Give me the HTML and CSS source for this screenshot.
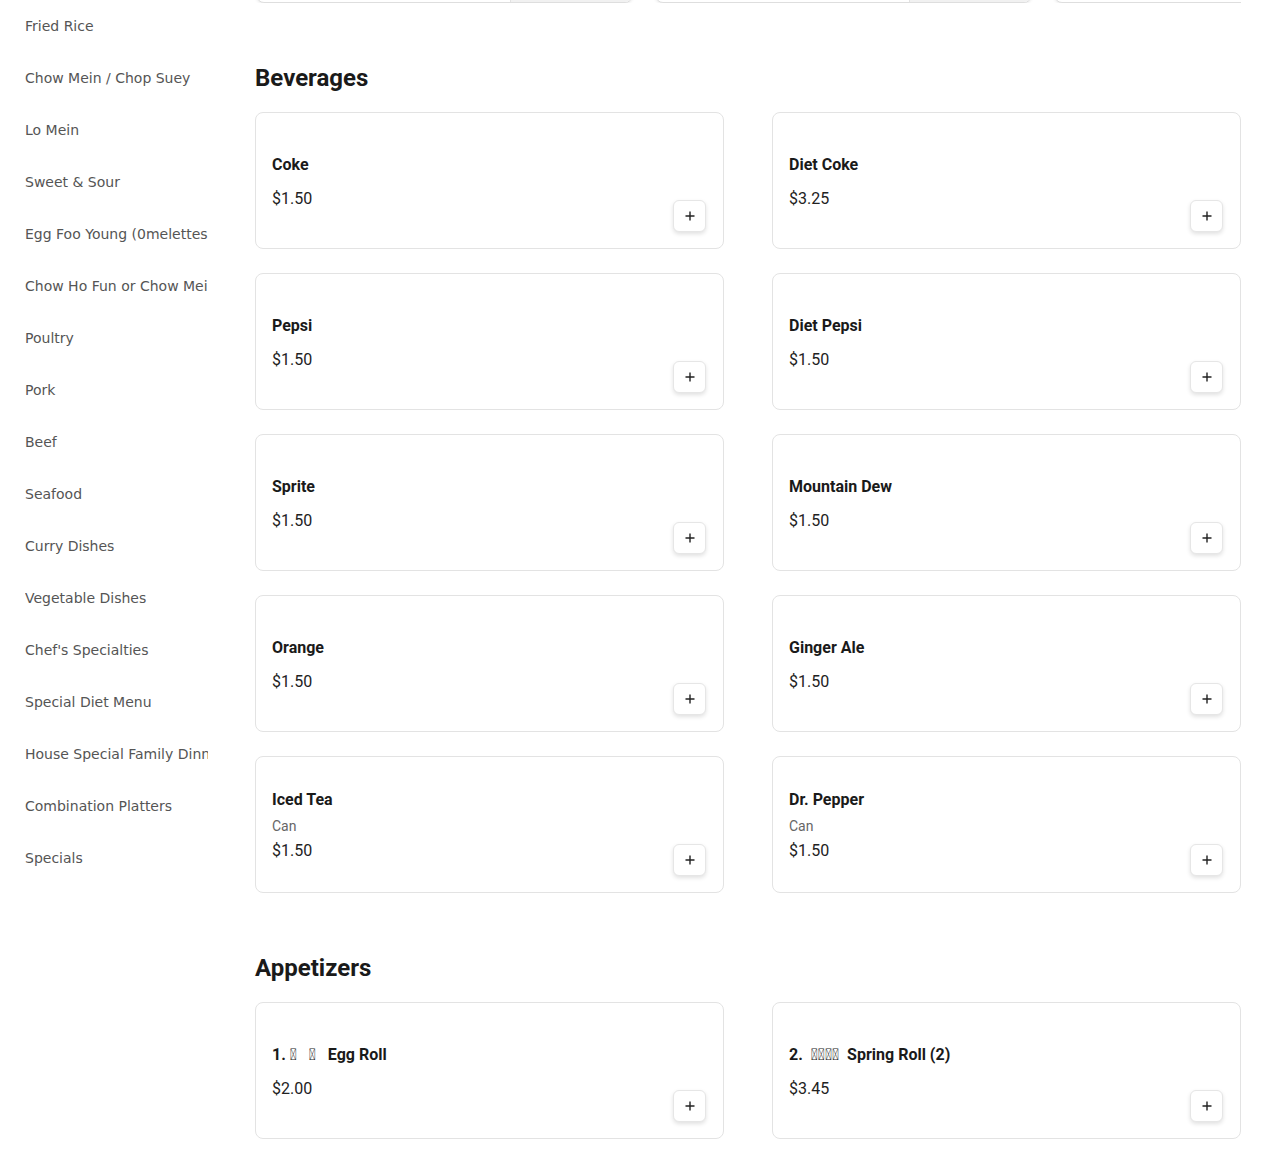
FILE: index.html
```html
<!DOCTYPE html>
<html>
<head>
<meta charset="utf-8">
<link rel="stylesheet" href="styles.css">
</head>
<body>
<div class="page">
  <nav class="sidebar">
    <div class="nav-item">Fried Rice</div>
    <div class="nav-item">Chow Mein / Chop Suey</div>
    <div class="nav-item">Lo Mein</div>
    <div class="nav-item">Sweet &amp; Sour</div>
    <div class="nav-item">Egg Foo Young (0melettes</div>
    <div class="nav-item">Chow Ho Fun or Chow Mei Fun</div>
    <div class="nav-item">Poultry</div>
    <div class="nav-item">Pork</div>
    <div class="nav-item">Beef</div>
    <div class="nav-item">Seafood</div>
    <div class="nav-item">Curry Dishes</div>
    <div class="nav-item">Vegetable Dishes</div>
    <div class="nav-item">Chef's Specialties</div>
    <div class="nav-item">Special Diet Menu</div>
    <div class="nav-item">House Special Family Dinner</div>
    <div class="nav-item">Combination Platters</div>
    <div class="nav-item">Specials</div>
  </nav>
  <main class="content">
    <div class="strip">
      <div class="strip-card"><div class="strip-body"></div><div class="strip-img"></div></div>
      <div class="strip-card"><div class="strip-body"></div><div class="strip-img"></div></div>
      <div class="strip-card"><div class="strip-body"></div><div class="strip-img"></div></div>
    </div>

    <section class="section">
      <h2 class="section-title">Beverages</h2>
      <div class="grid">
        <div class="card"><div class="info"><div class="name">Coke</div><div class="price">$1.50</div></div><button class="add"><svg width="12" height="12" viewBox="0 0 12 12"><path d="M6 1.5v9M1.5 6h9" stroke="#222" stroke-width="1.4"/></svg></button></div>
        <div class="card"><div class="info"><div class="name">Diet Coke</div><div class="price">$3.25</div></div><button class="add"><svg width="12" height="12" viewBox="0 0 12 12"><path d="M6 1.5v9M1.5 6h9" stroke="#222" stroke-width="1.4"/></svg></button></div>
        <div class="card"><div class="info"><div class="name">Pepsi</div><div class="price">$1.50</div></div><button class="add"><svg width="12" height="12" viewBox="0 0 12 12"><path d="M6 1.5v9M1.5 6h9" stroke="#222" stroke-width="1.4"/></svg></button></div>
        <div class="card"><div class="info"><div class="name">Diet Pepsi</div><div class="price">$1.50</div></div><button class="add"><svg width="12" height="12" viewBox="0 0 12 12"><path d="M6 1.5v9M1.5 6h9" stroke="#222" stroke-width="1.4"/></svg></button></div>
        <div class="card"><div class="info"><div class="name">Sprite</div><div class="price">$1.50</div></div><button class="add"><svg width="12" height="12" viewBox="0 0 12 12"><path d="M6 1.5v9M1.5 6h9" stroke="#222" stroke-width="1.4"/></svg></button></div>
        <div class="card"><div class="info"><div class="name">Mountain Dew</div><div class="price">$1.50</div></div><button class="add"><svg width="12" height="12" viewBox="0 0 12 12"><path d="M6 1.5v9M1.5 6h9" stroke="#222" stroke-width="1.4"/></svg></button></div>
        <div class="card"><div class="info"><div class="name">Orange</div><div class="price">$1.50</div></div><button class="add"><svg width="12" height="12" viewBox="0 0 12 12"><path d="M6 1.5v9M1.5 6h9" stroke="#222" stroke-width="1.4"/></svg></button></div>
        <div class="card"><div class="info"><div class="name">Ginger Ale</div><div class="price">$1.50</div></div><button class="add"><svg width="12" height="12" viewBox="0 0 12 12"><path d="M6 1.5v9M1.5 6h9" stroke="#222" stroke-width="1.4"/></svg></button></div>
        <div class="card"><div class="info"><div class="name">Iced Tea</div><div class="desc">Can</div><div class="price">$1.50</div></div><button class="add"><svg width="12" height="12" viewBox="0 0 12 12"><path d="M6 1.5v9M1.5 6h9" stroke="#222" stroke-width="1.4"/></svg></button></div>
        <div class="card"><div class="info"><div class="name">Dr. Pepper</div><div class="desc">Can</div><div class="price">$1.50</div></div><button class="add"><svg width="12" height="12" viewBox="0 0 12 12"><path d="M6 1.5v9M1.5 6h9" stroke="#222" stroke-width="1.4"/></svg></button></div>
      </div>
    </section>

    <section class="section">
      <h2 class="section-title">Appetizers</h2>
      <div class="grid">
        <div class="card"><div class="info"><div class="name">1. &#xE000; &nbsp; &#xE001; &nbsp; Egg Roll</div><div class="price">$2.00</div></div><button class="add"><svg width="12" height="12" viewBox="0 0 12 12"><path d="M6 1.5v9M1.5 6h9" stroke="#222" stroke-width="1.4"/></svg></button></div>
        <div class="card"><div class="info"><div class="name">2. &nbsp;&#xE002;&#xE003;&#xE004;&#xE005; &nbsp;Spring Roll (2)</div><div class="price">$3.45</div></div><button class="add"><svg width="12" height="12" viewBox="0 0 12 12"><path d="M6 1.5v9M1.5 6h9" stroke="#222" stroke-width="1.4"/></svg></button></div>
      </div>
    </section>
  </main>
</div>
</body>
</html>
```

FILE: styles.css
```css
* { box-sizing: border-box; }
html, body { margin: 0; padding: 0; background: #fff; }
body { font-family: Roboto, "Liberation Sans", sans-serif; color: #1a1a1a; }

.page { display: flex; align-items: flex-start; }

.sidebar {
  width: 230px;
  flex: none;
  padding-left: 25px;
}
.nav-item {
  width: 183px;
  height: 52px;
  line-height: 52px;
  font-family: "DejaVu Sans", sans-serif;
  font-size: 14px;
  color: #555;
  white-space: nowrap;
  overflow: hidden;
}

.content {
  width: 986px;
  margin-left: 25px;
  flex: none;
}

.strip {
  height: 3px;
  overflow: hidden;
  display: flex;
  align-items: flex-end;
  gap: 22px;
  padding-left: 1px;
}
.strip-card {
  flex: none;
  width: 377px;
  height: 120px;
  display: flex;
  border: 1px solid #dedede;
  border-radius: 8px;
  overflow: hidden;
  box-shadow: 0 1px 3px rgba(0,0,0,0.08);
  background: #fff;
}
.strip-body { flex: 1; }
.strip-img { width: 122px; background: #f1f1f1; border-left: 1px solid #e2e2e2; }

.section { margin-top: 61px; }
.section-title {
  margin: 0 0 20px;
  font-size: 24px;
  line-height: 28px;
  font-weight: 700;
  color: #1a1a1a;
}

.grid {
  display: grid;
  grid-template-columns: 469px 469px;
  column-gap: 48px;
  row-gap: 24px;
}

.card {
  height: 137px;
  border: 1px solid #e3e3e3;
  border-radius: 8px;
  padding: 16px;
  display: flex;
  align-items: center;
  justify-content: space-between;
  background: #fff;
}
.info { display: flex; flex-direction: column; padding-top: 2px; }
.name {
  font-size: 16px;
  line-height: 22px;
  font-weight: 700;
  color: #1a1a1a;
  white-space: pre;
}
.desc {
  margin-top: 5px;
  font-size: 14px;
  line-height: 20px;
  color: #666;
}
.price {
  font-size: 16px;
  line-height: 22px;
  color: #222;
}
.name + .price { margin-top: 12px; }
.desc + .price { margin-top: 4px; }

.add {
  align-self: flex-end;
  width: 33px;
  height: 32px;
  margin-right: 1px;
  padding: 0;
  border: 1px solid #e6e6e6;
  border-radius: 6px;
  background: #fff;
  box-shadow: 0 2px 4px rgba(0,0,0,0.12);
  display: flex;
  align-items: center;
  justify-content: center;
  cursor: pointer;
}
```
